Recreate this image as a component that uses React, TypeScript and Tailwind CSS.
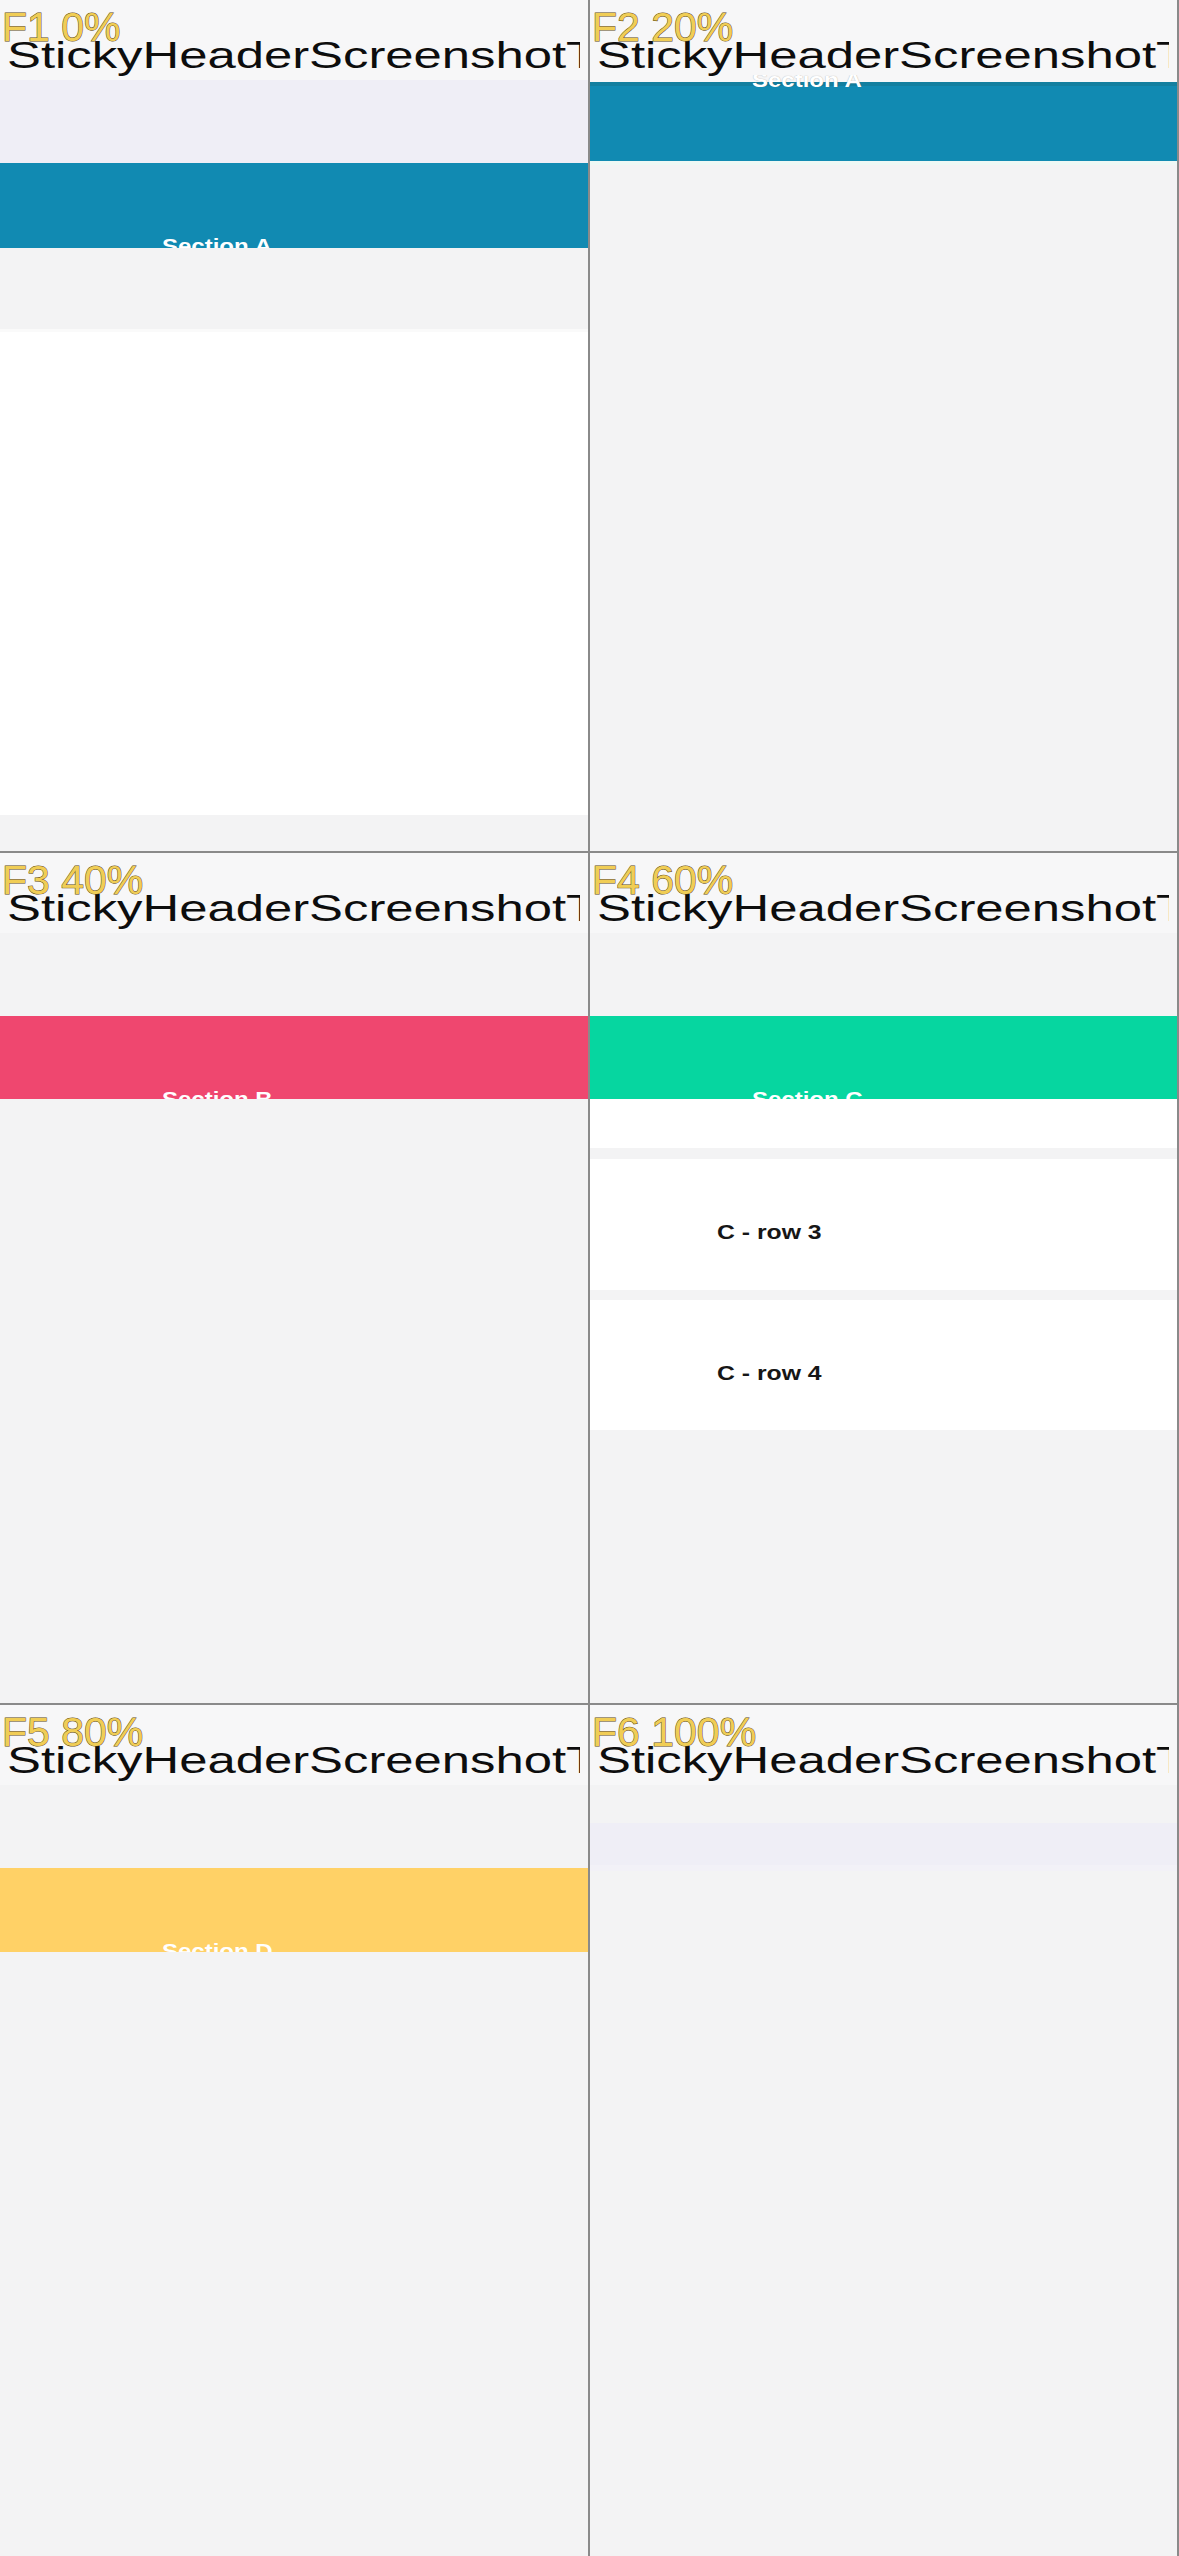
import React from "react";

type FrameProps = { tag: string; children?: React.ReactNode };

// One captured phone frame: sticky title bar, scroll content, and a step tag on top.
function Frame({ tag, children }: FrameProps) {
  return (
    <section className="relative flex flex-col overflow-hidden bg-[#f3f3f4] font-['Liberation_Sans',Arial,sans-serif]">
      <header className="h-[80px] shrink-0 bg-[#f7f7f8] pl-[7px] pr-[8px] pt-[34px]">
        <div className="flex overflow-hidden">
          <span className="block shrink-0 origin-left scale-x-[1.373] whitespace-nowrap text-[37px] leading-[44px] text-[#0d0d0d]">
            StickyHeaderScreenshotTest
          </span>
        </div>
      </header>
      {children}
      <span className="absolute left-[2px] top-[7px] z-10 whitespace-nowrap text-[41px] leading-none text-[#f0cd55] [-webkit-text-stroke:1px_#5e4a14] [paint-order:stroke_fill]">
        {tag}
      </span>
    </section>
  );
}

type BandProps = { name: string; className: string };

// Coloured section header; its label sits low and is cut by the band's bottom edge.
function SectionBand({ name, className }: BandProps) {
  return (
    <div className={`shrink-0 overflow-hidden pl-[162px] pt-[73px] ${className}`}>
      <span className="block origin-left scale-x-[1.2] whitespace-nowrap text-[20px] font-bold leading-none text-white">
        Section {name}
      </span>
    </div>
  );
}

function Row({ text, className }: { text?: string; className: string }) {
  return (
    <div className={`shrink-0 bg-white pl-[127px] pt-[62px] ${className}`}>
      {text && (
        <span className="block origin-left scale-x-[1.18] whitespace-nowrap text-[21px] font-bold leading-none text-[#161616]">
          {text}
        </span>
      )}
    </div>
  );
}

export default function App() {
  return (
    <div className="grid h-[2556px] w-[1179px] grid-cols-[588px_587px] grid-rows-[851px_850px_851px] gap-[2px] bg-[#8a8a8a] pr-[2px]">
      {/* 0% */}
      <Frame tag="F1 0%">
        <div className="h-[83px] shrink-0 bg-[#efeef6]" />
        <SectionBand name="A" className="h-[85px] bg-[#118ab2]" />
        <div className="h-[81px] shrink-0" />
        <div className="h-[486px] shrink-0 border-t-[3px] border-[#fafafa] bg-white" />
      </Frame>

      {/* 20% */}
      <Frame tag="F2 20%">
        <div className="h-[2px] shrink-0 bg-[#f7f7f8]" />
        <div className="h-[79px] shrink-0 border-t-[4px] border-[#137f9f] bg-[#118ab2]" />
        <div className="h-[4px] shrink-0 bg-[#eef8f5]" />
        <div className="absolute left-[162px] top-[75px] z-[5] h-[12px] w-[140px] overflow-hidden">
          <span className="-mt-[5px] block w-max origin-left scale-x-[1.2] whitespace-nowrap text-[20px] font-bold leading-none text-white [text-shadow:0_0_1px_rgba(0,0,0,0.35)]">
            Section A
          </span>
        </div>
      </Frame>

      {/* 40% */}
      <Frame tag="F3 40%">
        <div className="h-[83px] shrink-0" />
        <SectionBand name="B" className="h-[83px] bg-[#ef476f]" />
      </Frame>

      {/* 60% */}
      <Frame tag="F4 60%">
        <div className="h-[83px] shrink-0" />
        <SectionBand name="C" className="h-[83px] bg-[#06d6a0]" />
        <div className="h-[49px] shrink-0 bg-white" />
        <div className="h-[11px] shrink-0" />
        <Row text="C - row 3" className="h-[131px]" />
        <div className="h-[10px] shrink-0" />
        <Row text="C - row 4" className="h-[130px]" />
      </Frame>

      {/* 80% */}
      <Frame tag="F5 80%">
        <div className="h-[83px] shrink-0" />
        <SectionBand name="D" className="h-[84px] bg-[#ffd166]" />
      </Frame>

      {/* 100% */}
      <Frame tag="F6 100%">
        <div className="h-[38px] shrink-0" />
        <div className="h-[42px] shrink-0 bg-[#efeef6]" />
        <div className="h-[6px] shrink-0 bg-[#f2f1f7]" />
      </Frame>
    </div>
  );
}
